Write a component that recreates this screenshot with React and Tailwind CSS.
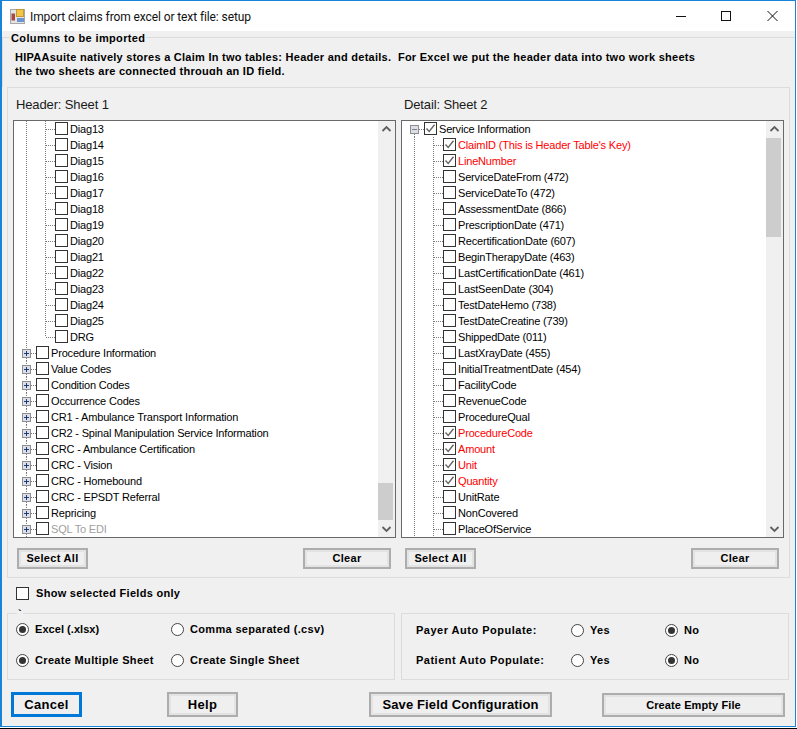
import React from "react";

const leftRows = [
  ...["Diag13","Diag14","Diag15","Diag16","Diag17","Diag18","Diag19","Diag20","Diag21","Diag22","Diag23","Diag24","Diag25"].map((t) => ({ t, l: 2 })),
  { t: "DRG", l: 2, last: true },
  ...["Procedure Information","Value Codes","Condition Codes","Occurrence Codes","CR1 - Ambulance Transport Information","CR2 - Spinal Manipulation Service Information","CRC - Ambulance Certification","CRC - Vision","CRC - Homebound","CRC - EPSDT Referral","Repricing"].map((t) => ({ t, l: 1 })),
  { t: "SQL To EDI", l: 1, gray: true },
];

const rightRows = [
  { t: "Service Information", l: 0, on: true },
  { t: "ClaimID (This is Header Table's Key)", l: 2, on: true, red: true },
  { t: "LineNumber", l: 2, on: true, red: true },
  ...["ServiceDateFrom (472)","ServiceDateTo (472)","AssessmentDate (866)","PrescriptionDate (471)","RecertificationDate (607)","BeginTherapyDate (463)","LastCertificationDate (461)","LastSeenDate (304)","TestDateHemo (738)","TestDateCreatine (739)","ShippedDate (011)","LastXrayDate (455)","InitialTreatmentDate (454)","FacilityCode","RevenueCode","ProcedureQual"].map((t) => ({ t, l: 2 })),
  ...["ProcedureCode","Amount","Unit","Quantity"].map((t) => ({ t, l: 2, on: true, red: true })),
  ...["UnitRate","NonCovered","PlaceOfService"].map((t) => ({ t, l: 2 })),
];

function Guides({ row }) {
  const dot = { stroke: "#7a7a7a", strokeDasharray: "1 1", shapeRendering: "crispEdges" };
  if (row.l === 2) {
    return (
      <svg width="41" height="16" className="shrink-0 block">
        <line x1="12.5" y1="0" x2="12.5" y2="16" {...dot} />
        <line x1="31.5" y1="0" x2="31.5" y2={row.last ? 8 : 16} {...dot} />
        <line x1="32" y1="8.5" x2="41" y2="8.5" {...dot} />
      </svg>
    );
  }
  const minus = row.l === 0;
  return (
    <svg width="22" height="16" className="shrink-0 block">
      {!minus && <line x1="12.5" y1="0" x2="12.5" y2="4" {...dot} />}
      <line x1="12.5" y1="13" x2="12.5" y2="16" {...dot} />
      <line x1="17" y1="8.5" x2="22" y2="8.5" {...dot} />
      <rect x="8.5" y="4.5" width="8" height="8" fill="#dcdfe6" stroke="#8e8f8f" shapeRendering="crispEdges" />
      <line x1="10" y1="8.5" x2="15" y2="8.5" stroke={minus ? "#7b8290" : "#1f3a7a"} shapeRendering="crispEdges" />
      {!minus && <line x1="12.5" y1="6" x2="12.5" y2="11" stroke="#1f3a7a" shapeRendering="crispEdges" />}
    </svg>
  );
}

function Check({ on, className = "" }) {
  return (
    <span className={`shrink-0 block w-[13px] h-[13px] border border-[#333333] bg-white ${className}`}>
      {on && (
        <svg width="11" height="11" viewBox="0 0 11 11" className="block">
          <path d="M1.5 5.5 L4.2 8.5 L9.5 1.8" fill="none" stroke="#666666" strokeWidth="1.4" />
        </svg>
      )}
    </span>
  );
}

function Row({ row }) {
  const color = row.red ? "text-[#ff0000]" : row.gray ? "text-[#a0a0a0]" : "text-black";
  return (
    <div className="flex h-4 items-start">
      <Guides row={row} />
      <Check on={row.on} className="mt-px" />
      <span className={`ml-[2px] h-4 leading-4 whitespace-nowrap tracking-[-0.18px] ${color}`}>{row.t}</span>
    </div>
  );
}

function Chevron({ up }) {
  return (
    <svg width="17" height="17" viewBox="0 0 17 17" className="block shrink-0">
      <path d={up ? "M4.5 10 L8.5 6 L12.5 10" : "M4.5 7 L8.5 11 L12.5 7"} fill="none" stroke="#606060" strokeWidth="1.8" />
    </svg>
  );
}

function Tree({ rows, thumb }) {
  return (
    <div className="flex w-[383px] h-[418px] border border-[#696969] bg-white text-[11px]">
      <div className="flex-1 overflow-hidden">
        {rows.map((r) => (
          <Row key={r.t} row={r} />
        ))}
      </div>
      <div className="flex flex-col w-[17px] bg-[#f0f0f0]">
        <Chevron up />
        <div className="flex-1">{thumb}</div>
        <Chevron />
      </div>
    </div>
  );
}

function Btn({ children, className = "" }) {
  return (
    <div className={`flex items-center justify-center border-2 border-[#adadad] bg-[#efefef] shadow-[inset_0_0_0_2px_#e3e3e3] font-bold text-black ${className}`}>
      {children}
    </div>
  );
}

function Column({ title, rows, thumb }) {
  return (
    <div className="w-[388px] pl-[5px]">
      <div className="ml-[3px] mt-[8px] h-[24px] leading-[17px] text-[13px] text-[#1a1a1a] tracking-[-0.13px]">{title}</div>
      <Tree rows={rows} thumb={thumb} />
      <div className="flex justify-between w-[374px] ml-[4px] mt-[10px] text-[11px] tracking-[0.3px]">
        <Btn className="w-[71px] h-[21px]">Select All</Btn>
        <Btn className="w-[88px] h-[21px]">Clear</Btn>
      </div>
    </div>
  );
}

function Radio({ on }) {
  return (
    <span className="shrink-0 flex items-center justify-center w-[13px] h-[13px] rounded-full border border-[#444444] bg-white">
      {on && <span className="block w-[7px] h-[7px] rounded-full bg-[#333333]" />}
    </span>
  );
}

function RadioLabel({ on, children, className = "" }) {
  return (
    <div className={`flex items-center gap-[6px] ${className}`}>
      <Radio on={on} />
      <span className="whitespace-nowrap">{children}</span>
    </div>
  );
}

export default function App() {
  return (
    <div className="w-[797px] h-[729px] bg-white overflow-hidden font-['Liberation_Sans',Arial,sans-serif] text-[11px] text-black">
      <div className="flex flex-col w-[796px] h-[727px] border-t border-b border-r border-l-2 border-[#1883d7]">
        {/* Title bar */}
        <div className="flex items-center h-[30px] shrink-0 bg-white">
          <svg width="16" height="16" viewBox="0 0 16 16" className="ml-[8px] block shrink-0">
            <rect x="0.5" y="1.5" width="14" height="14" fill="#e4e4e4" stroke="#a8a8a8" />
            <rect x="6.5" y="1.5" width="7" height="7" fill="#f3c64a" stroke="#c49a35" />
            <rect x="1.5" y="5.5" width="3.5" height="7" fill="#a9483f" />
            <rect x="7" y="10" width="7" height="4" fill="#6a95d2" />
          </svg>
          <span className="ml-[4px] mt-px text-[12px] tracking-[-0.1px] font-['Roboto',sans-serif] text-[#111111] whitespace-nowrap">
            Import claims from excel or text file: setup
          </span>
          <div className="flex ml-auto items-center">
            <svg width="45" height="30" className="block">
              <line x1="0" y1="15.5" x2="10" y2="15.5" stroke="#111" />
            </svg>
            <svg width="46" height="30" className="block">
              <rect x="0.5" y="10.5" width="9" height="9" fill="none" stroke="#111" />
            </svg>
            <svg width="28" height="30" className="block">
              <path d="M0.5 10 L10.5 20 M10.5 10 L0.5 20" stroke="#111" />
            </svg>
          </div>
        </div>

        {/* Body */}
        <div className="flex-1 bg-[#f0f0f0] flex flex-col min-h-0">
          <div className="relative mt-[6px] h-[50px] shrink-0 border-t border-l border-[#dcdcdc]">
            <span className="absolute left-[7px] -top-[7px] px-px bg-[#f0f0f0] font-bold text-[11px] tracking-[0.36px] leading-[15px]">
              Columns to be imported
            </span>
            <div className="ml-[12px] mt-[12px] h-[25px] overflow-hidden font-bold leading-[14px] tracking-[0.256px] whitespace-nowrap">
              <div>HIPAAsuite natively stores a Claim In two tables: Header and details.&nbsp; For Excel we put the header data into two work sheets</div>
              <div>the two sheets are connected through an ID field.</div>
            </div>
          </div>

          <div className="ml-[5px] w-[783px] h-[491px] shrink-0 border border-[#dcdcdc] flex">
            <Column title="Header: Sheet 1" rows={leftRows} thumb={<div className="mt-[345px] h-[37px] w-[15px] bg-[#cdcdcd]" />} />
            <Column title="Detail: Sheet 2" rows={rightRows} thumb={<div className="h-[99px] w-[15px] bg-[#cdcdcd]" />} />
          </div>

          <div className="flex items-center ml-[14px] mt-[5px] h-[20px] shrink-0 gap-[7px] font-bold tracking-[0.29px]">
            <Check />
            <span>Show selected Fields only</span>
          </div>

          <div className="flex gap-[6px] ml-[5px] mt-[10px] shrink-0 font-bold tracking-[0.33px]">
            <div className="relative w-[388px] h-[67px] border border-[#dcdcdc] px-[8px] pt-[7px]">
              <span className="absolute left-[9px] -top-[5px] leading-[8px] px-px bg-[#f0f0f0]">`</span>
              <div className="flex h-[17px]">
                <RadioLabel on className="w-[155px] tracking-[0.05px]">Excel (.xlsx)</RadioLabel>
                <RadioLabel>Comma separated (.csv)</RadioLabel>
              </div>
              <div className="flex h-[17px] mt-[14px]">
                <RadioLabel on className="w-[155px]">Create Multiple Sheet</RadioLabel>
                <RadioLabel>Create Single Sheet</RadioLabel>
              </div>
            </div>
            <div className="w-[388px] h-[67px] border border-[#dcdcdc] pl-[14px] pt-[8px]">
              <div className="flex items-center h-[17px]">
                <span className="w-[155px] whitespace-nowrap tracking-[0.5px]">Payer Auto Populate:</span>
                <RadioLabel className="w-[94px]">Yes</RadioLabel>
                <RadioLabel on>No</RadioLabel>
              </div>
              <div className="flex items-center h-[17px] mt-[13px]">
                <span className="w-[155px] whitespace-nowrap tracking-[0.5px]">Patient Auto Populate:</span>
                <RadioLabel className="w-[94px]">Yes</RadioLabel>
                <RadioLabel on>No</RadioLabel>
              </div>
            </div>
          </div>

          <div className="flex items-start ml-[9px] mt-[12px] shrink-0 text-[13px] tracking-[0.3px]">
            <div className="flex items-center justify-center w-[71px] h-[25px] border-[3px] border-[#0078d7] bg-[#efefef] font-bold">Cancel</div>
            <Btn className="ml-[85px] w-[71px] h-[25px]">Help</Btn>
            <Btn className="ml-[131px] w-[183px] h-[25px] tracking-[0.13px]">Save Field Configuration</Btn>
            <Btn className="ml-[50px] mt-px w-[183px] h-[24px] text-[11px] tracking-[0.1px]">Create Empty File</Btn>
          </div>
        </div>
      </div>
      <div className="h-px mt-px bg-black" />
    </div>
  );
}
